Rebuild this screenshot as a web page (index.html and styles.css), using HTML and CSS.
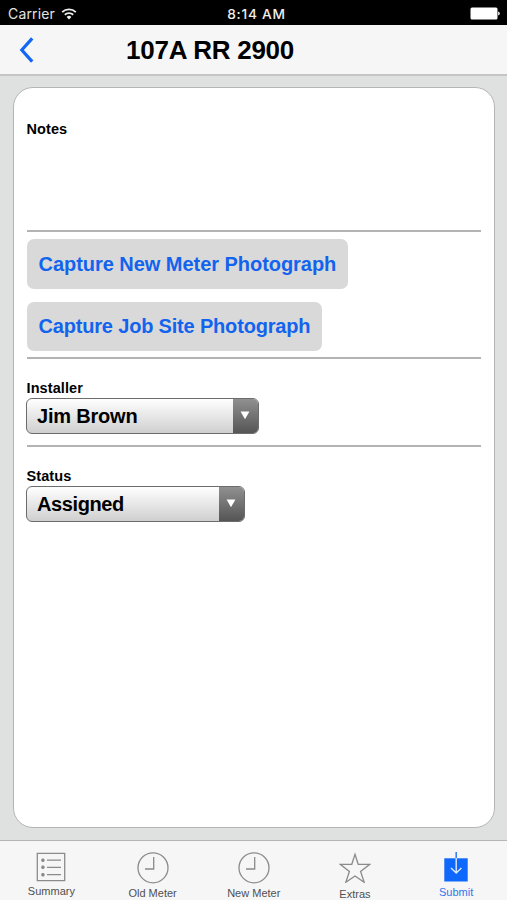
FILE: index.html
```html
<!DOCTYPE html>
<html lang="en">
<head>
<meta charset="utf-8">
<title>107A RR 2900</title>
<link rel="stylesheet" href="styles.css">
</head>
<body>
<div class="status-bar">
  <div class="carrier"><span>Carrier</span>
    <svg width="16" height="12" viewBox="0 0 16 12" fill="none" stroke="#eee" stroke-width="1.9"><path d="M1.2 4.1a9.8 9.8 0 0 1 13.6 0M3.8 6.8a6 6 0 0 1 8.4 0"/><path d="M8 11.5 5.6 9a3.5 3.5 0 0 1 4.8 0z" fill="#eee" stroke="none"/></svg>
  </div>
  <div class="time">8:14 AM</div>
  <div class="battery"><svg width="30" height="13" viewBox="0 0 30 13" fill="#fff"><rect x=".5" y=".5" width="27" height="12" rx="1.5"/><path d="M28.2 4.5q1.6.4 1.6 2t-1.6 2z"/></svg></div>
</div>
<header class="nav">
  <svg class="back" width="15" height="26" viewBox="0 0 15 26" fill="none" stroke="#1268f5" stroke-width="3.2"><path d="M13.2 1.4 2.8 13l10.4 11.6"/></svg>
  <h1>107A RR 2900</h1>
</header>
<main>
  <div class="card">
    <section class="notes"><label>Notes</label></section>
    <section class="photos">
      <button>Capture New Meter Photograph</button>
      <button>Capture Job Site Photograph</button>
    </section>
    <section class="field installer">
      <label>Installer</label>
      <div class="select"><span>Jim Brown</span><i><svg width="10" height="9" viewBox="0 0 10 9"><path d="M.6.5h8.8L5 8.3z" fill="#fff"/></svg></i></div>
    </section>
    <section class="field status">
      <label>Status</label>
      <div class="select"><span>Assigned</span><i><svg width="10" height="9" viewBox="0 0 10 9"><path d="M.6.5h8.8L5 8.3z" fill="#fff"/></svg></i></div>
    </section>
  </div>
</main>
<nav class="tabs">
  <a class="tab summary"><svg width="32" height="32" viewBox="0 0 32 32" fill="none" stroke="#8b8b8b" stroke-width="1.3"><path d="M2.3 1.3h27.4v27.4H2.3zM12 8.2h14M12 15.3h14M12 22.7h14"/><path d="M6.2 8.2h3.4M7.9 6.5v3.4M6.2 15.3h3.4M7.9 13.6v3.4M6.2 22.7h3.4M7.9 21v3.4" stroke-width="2"/></svg><span>Summary</span></a>
  <a class="tab old"><svg width="32" height="32" viewBox="0 0 32 32" fill="none" stroke="#8b8b8b" stroke-width="1.3"><circle cx="16" cy="15.8" r="15"/><path d="M16.7 5v12H8"/></svg><span>Old Meter</span></a>
  <a class="tab new"><svg width="32" height="32" viewBox="0 0 32 32" fill="none" stroke="#8b8b8b" stroke-width="1.3"><circle cx="16" cy="15.8" r="15"/><path d="M16.7 5v12H8"/></svg><span>New Meter</span></a>
  <a class="tab extras"><svg width="32" height="32" viewBox="0 0 32 32" fill="none" stroke="#8b8b8b" stroke-width="1.3"><path d="m16 3.3 3.2 10H30.8l-9.2 7.2 3.6 10.8L16 25l-9.2 6.3 3.6-10.8-9.2-7.2h11.6z"/></svg><span>Extras</span></a>
  <a class="tab submit"><svg width="32" height="32" viewBox="0 0 32 32" fill="none"><path d="M4.3 7.3h23.4v23.2H4.3z" fill="#0d68fb"/><path d="M16.2 1v7" stroke="#2f78f5" stroke-width="1.5"/><path d="M16.2 7v15M11 17l5.2 5 5.2-5" stroke="#dce9ff" stroke-width="1.4"/></svg><span>Submit</span></a>
</nav>
</body>
</html>
```

FILE: styles.css
```css
* { box-sizing: border-box; }
body {
  margin: 0;
  width: 507px;
  height: 900px;
  display: flex;
  flex-direction: column;
  overflow: hidden;
  background: #dfe1e0;
  color: #000;
  font-family: "Liberation Sans", Arial, sans-serif;
}
svg { display: block; flex: none; }
.status-bar {
  flex: none;
  height: 25px;
  padding: 2px 7px 0 8px;
  display: grid;
  grid-template-columns: 1fr auto 1fr;
  align-items: center;
  background: #000;
  color: #e4e4e4;
  font: 14px/22px Inter, sans-serif;
}
.carrier { display: flex; gap: 6px; align-items: center; letter-spacing: 0.15px; }
.time { color: #eee; font-weight: 500; font-size: 13.7px; letter-spacing: 0.75px; margin-left: 5px; }
.battery { justify-self: end; }
.nav {
  flex: none;
  height: 51px;
  display: flex;
  align-items: center;
  padding-left: 19px;
  background: #f6f6f6;
  border-bottom: 2px solid #c5c5c5;
}
h1 { margin: 0 0 0 92px; font-size: 26px; line-height: 30px; letter-spacing: -0.25px; white-space: nowrap; }
main { flex: 1; padding: 11px 12px 12px 13px; }
.card {
  height: 741px;
  padding: 0 13px 0 12.5px;
  background: #fff;
  border: 1.5px solid #b4b5b5;
  border-radius: 20px;
}
label { display: block; font-size: 14.5px; line-height: 16px; font-weight: bold; letter-spacing: 0.1px; }
section { border-bottom: 2px solid #b3b3b3; }
.notes { height: 144px; padding-top: 33px; }
.photos {
  height: 127px;
  padding-top: 7px;
  display: flex;
  flex-direction: column;
  align-items: flex-start;
  gap: 13px;
}
button {
  height: 50px;
  padding: 0 12px;
  border: 0;
  border-radius: 7px;
  background: #d9d9d9;
  color: #1263ee;
  font: bold 20px/50px "Liberation Sans", Arial, sans-serif;
  letter-spacing: -0.04px;
  white-space: nowrap;
}
button + button { height: 49px; line-height: 49px; letter-spacing: -0.18px; }
.installer { height: 88px; padding-top: 21px; }
.status { border: 0; padding-top: 21px; }
.select {
  width: 233px;
  height: 36px;
  margin: 2px 0 0 -0.5px;
  display: flex;
  border: 1.5px solid #6c6c6c;
  border-radius: 6px;
  overflow: hidden;
  background: linear-gradient(#fff, #cfcfcf);
}
.status .select { width: 219px; }
.select span { flex: 1; padding-left: 10px; font: bold 20px/34px "Liberation Sans", Arial, sans-serif; letter-spacing: -0.2px; }
.status .select span { letter-spacing: -0.4px; }
.select i {
  width: 25px;
  padding: 0 2px 2px 0;
  display: flex;
  align-items: center;
  justify-content: center;
  background: linear-gradient(#909090, #555);
}
.tabs {
  flex: none;
  height: 60px;
  padding-left: 0.8px;
  display: grid;
  grid-template-columns: repeat(5, 101.2px);
  background: #f6f6f6;
  border-top: 1.5px solid #b4b6b5;
}
.tab {
  padding-top: 11px;
  display: flex;
  flex-direction: column;
  align-items: center;
  color: #505050;
  font-size: 11px;
  line-height: 14px;
}
.summary span { margin-top: 0; }
.old span, .new span { margin-top: 2px; }
.extras span { margin-top: 4px; }
.submit span { margin-top: 2px; }
.submit { color: #2f76ea; }
.extras svg, .submit svg { margin-top: -1px; }
```
